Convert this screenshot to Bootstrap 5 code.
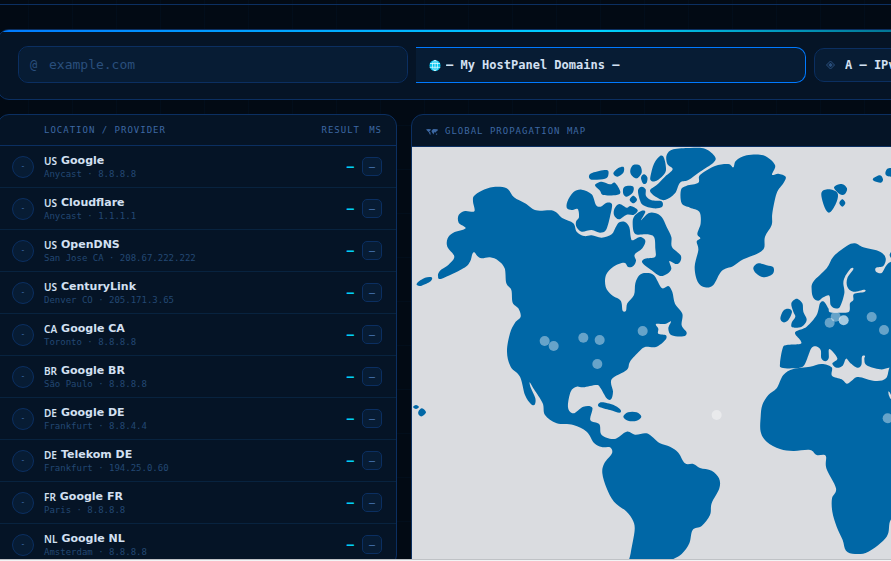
<!DOCTYPE html>
<html lang="en" data-bs-theme="dark">
<head>
<meta charset="utf-8">
<meta name="viewport" content="width=device-width, initial-scale=1">
<title>DNS Propagation</title>
<link href="https://cdn.jsdelivr.net/npm/bootstrap@5.3.0/dist/css/bootstrap.min.css" rel="stylesheet">
<style>
:root{--mono:"DejaVu Sans Mono","Liberation Mono",monospace;--line:#0b2f61;--panel:#051426;--field:#071c34;--dim:#234873;--label:#3d68a3;--text:#d3e0f2}
body{background:#020a14;color:var(--text);font-family:var(--mono);height:100vh;overflow:hidden}
.stage{overflow:hidden;background-image:linear-gradient(90deg,rgba(0,122,255,.03) 1px,transparent 1px),linear-gradient(rgba(0,122,255,.03) 1px,transparent 1px);background-size:44px 44px;background-position:28px 37px}
.topline{height:5px;border-bottom:1px solid var(--line)}
.shell{min-width:1200px;margin-left:-3px;padding-top:24px}
.panel{background:var(--panel);border:1px solid var(--line);border-radius:12px;overflow:hidden}
.search{margin-bottom:14px}
.search::before{content:"";display:block;height:2px;background:linear-gradient(90deg,#007aff,#00d4ff 50%,transparent)}
.fields{display:grid;grid-template-columns:390fr 390fr 362fr;gap:8px;padding:14px 20px 16px;align-items:center}
.fields .form-control,.fields .form-select{background-color:var(--field);border:1px solid var(--line);border-radius:10px;font-size:13px;line-height:19px;padding:8px 12px 8px 30px;color:var(--text);box-shadow:none}
.fields .form-control::placeholder{color:#2a4f7c;opacity:1}
.fields .form-select{font-size:12px;font-weight:700;background-image:none;line-height:18px;padding-left:30px}
.fields .domains{border-color:#007aff;border-left:0;border-radius:0 10px 10px 0}
.fields .rtype{height:34px;padding:7px 12px 7px 30px}
.glyph{left:12px;top:50%;transform:translateY(-50%);color:#2a4f7c;font-size:12px;line-height:14px;pointer-events:none}
.panels{display:grid;grid-template-columns:400px 1fr;gap:14px;align-items:start}
.cap{font-size:9px;line-height:13px;letter-spacing:1px;color:var(--label);font-weight:400}
.servers{width:100%;border-collapse:separate;border-spacing:0}
.servers th{height:31px;padding-top:2px;border-bottom:1px solid var(--line)}
.servers td{height:42px;border-bottom:1px solid #08233f}
.servers .who{padding-left:14px}
.servers th.who{padding-left:46px}
.servers .res{width:64px;text-align:right}
.servers td.res{padding-right:7px;color:#00d0f5;font-size:12px;font-weight:700}
.servers .ms{width:34px;padding-right:14px;text-align:right}
.server{gap:10px}
.dot{width:22px;height:22px;border:1px solid var(--line);background:var(--field);font-size:8px;color:var(--label)}
.cc{font:600 10px/14px "Noto Sans",sans-serif}
.host{font:700 11px/14px "DejaVu Sans",sans-serif}
.place{font-size:9px;line-height:12px;color:var(--dim)}
.pill{display:block;width:20px;border:1px solid var(--line);border-radius:5px;background:var(--field);color:#4a7ab8;font-size:10px;line-height:17px;text-align:center}
.maphead{height:32px;padding:2px 0 0 14px;gap:7px;border-bottom:1px solid var(--line)}
.world{display:block;width:100%;background:#dadce0}
.strip{height:2px;background:#f3f4f5;border-top:1px solid #bfc2c6}
</style>
<script src="https://cdn.jsdelivr.net/npm/bootstrap@5.3.0/dist/js/bootstrap.bundle.min.js"></script>
</head>
<body class="d-flex flex-column">
<main class="stage flex-grow-1">
  <div class="topline"></div>
  <div class="shell">
    <form class="panel search">
      <div class="fields">
        <div class="position-relative">
          <span class="glyph position-absolute" aria-hidden="true">@</span>
          <input class="form-control" type="text" placeholder="example.com" aria-label="Domain">
        </div>
        <div class="position-relative">
          <svg class="glyph position-absolute" width="14" height="14" viewBox="0 0 14 14" aria-hidden="true"><circle cx="7" cy="7.500" r="5.500" fill="#00c4ee"/><g fill="none" stroke="#d9faff" stroke-width=".8"><ellipse cx="7" cy="7.500" rx="2.500" ry="5.200"/><path d="M2 5.500h10M1.700 9.300h10.600M7 2.200v10.600"/></g></svg>
          <select class="form-select domains" aria-label="HostPanel domain"><option>— My HostPanel Domains —</option></select>
        </div>
        <div class="position-relative">
          <svg class="glyph position-absolute" width="9" height="9" viewBox="0 0 9 9" aria-hidden="true"><path d="M4.500.5l4 4-4 4-4-4z" fill="none" stroke="#2a4f7c"/><path d="M4.500 2.300l2.200 2.200-2.200 2.200-2.200-2.200z" fill="#2a4f7c"/></svg>
          <select class="form-select rtype" aria-label="Record type"><option>A — IPv4 Address</option></select>
        </div>
      </div>
    </form>
    <div class="panels">
      <section class="panel">
        <table class="servers">
          <thead><tr><th class="cap who">LOCATION / PROVIDER</th><th class="cap res">RESULT</th><th class="cap ms">MS</th></tr></thead>
          <tbody id="rows"></tbody>
        </table>
      </section>
      <section class="panel">
        <div class="maphead cap d-flex align-items-center">
          <svg width="12" height="8" viewBox="0 0 12 8" fill="#3d68a3" aria-hidden="true"><path d="M0 1.500L2 1l3 .3L4 3 3 3.500l1.500 1L4.500 7 3.500 6 3 4.500 1.500 3zM6 2l1.500-1 4 .2.5 1-1.500 1-.7 1.500-1-1L8 5 7.500 6.500 6.500 5 5.500 3.500zM10 5.500l1.300.2-.3 1.100-1.200-.3z"/></svg>
          <span>GLOBAL PROPAGATION MAP</span>
        </div>
        <svg class="world" viewBox="6 21 2352 1320" role="img" aria-label="World map of resolvers"><g id="land" fill="#0067a6"></g><g id="pins" fill="#fff"></g></svg>
      </section>
    </div>
  </div>
</main>
<div class="strip flex-shrink-0"></div>
<script>
const servers = [
  ["US","Google","Anycast · 8.8.8.8"],["US","Cloudflare","Anycast · 1.1.1.1"],
  ["US","OpenDNS","San Jose CA · 208.67.222.222"],["US","CenturyLink","Denver CO · 205.171.3.65"],
  ["CA","Google CA","Toronto · 8.8.8.8"],["BR","Google BR","São Paulo · 8.8.8.8"],
  ["DE","Google DE","Frankfurt · 8.8.4.4"],["DE","Telekom DE","Frankfurt · 194.25.0.60"],
  ["FR","Google FR","Paris · 8.8.8.8"],["NL","Google NL","Amsterdam · 8.8.8.8"]
];
document.getElementById("rows").innerHTML = servers.map(([c,n,p]) => `<tr>
  <td class="who"><div class="server d-flex align-items-center"><span class="dot rounded-circle d-flex align-items-center justify-content-center">-</span>
  <div><div class="d-flex gap-1"><span class="cc">${c}</span><span class="host">${n}</span></div><div class="place">${p}</div></div></div></td>
  <td class="res">—</td><td class="ms"><span class="pill">—</span></td></tr>`).join("");

// Coastlines: [offset x, offset y, "x,y x,y ..."], joined by smooth curves
const coasts = [
 [0,0,"192,168 215,152 250,141 290,145 312,172 345,190 378,211 430,212 458,235 490,250 500,275 522,288 545,286 575,293 605,283 617,262 628,247 645,246 658,262 662,290 668,301 690,291 706,302 697,325 674,344 678,362 670,378 655,381 642,368 610,380 588,405 587,440 605,465 632,482 638,512 648,512 652,490 672,465 676,430 688,406 707,399 732,406 755,444 775,438 787,456 795,491 817,521 815,556 830,578 820,589 785,586 775,566 783,544 765,552 738,552 745,566 745,581 768,586 765,601 738,621 705,621 688,634 660,665 650,690 605,718 609,755 603,778 590,775 572,745 560,735 520,742 500,740 482,755 474,802 490,820 520,800 547,803 541,840 568,853 575,885 613,897 650,875 675,884 705,880 720,885 750,910 780,920 805,938 825,970 850,972 870,984 905,992 927,1015 928,1045 905,1090 900,1125 875,1158 848,1170 838,1210 815,1242 780,1262 720,1290 655,1290 662,1240 674,1170 668,1140 650,1115 612,1085 590,1045 577,1000 583,970 606,940 600,922 575,921 553,910 530,875 490,855 440,850 405,825 398,790 372,748 359,727 363,745 376,775 374,794 362,791 345,765 330,710 302,680 291,635 300,580 315,548 332,530 325,505 308,488 304,450 289,430 284,385 265,362 240,352 215,355 202,348 193,337 187,342 180,365 160,385 95,416 84,408 90,392 115,375 133,350 112,320 113,295 130,278 167,265 146,248 146,225 165,213 193,214 189,185"],
 [0,0,"22,428 45,413 65,412 62,424 35,437 22,436"],
 [0,0,"9,801 18,795 27,801 18,807"],
 [0,0,"25,815 36,805 48,817 36,829 27,825"],
 [0,0,"567,790 580,787 615,797 632,810 628,818 600,810 567,800"],
 [0,0,"640,830 654,817 680,817 694,830 680,842 654,842"],
 [0,0,"472,185 490,157 515,149 545,163 558,195 572,200 590,188 606,193 600,230 588,270 570,278 545,270 515,275 500,262 498,245 507,232 503,207 485,210 471,205"],
 [0,0,"537,108 548,98 590,90 595,105 585,116 545,119"],
 [0,0,"610,100 625,84 641,81 640,98 622,110"],
 [0,0,"555,135 575,125 600,133 615,128 631,155 620,165 580,165 570,152"],
 [0,0,"640,145 650,138 670,140 668,158 650,170 640,162"],
 [0,0,"659,179 670,167 681,179 670,190"],
 [0,0,"661,90 670,75 690,77 695,98 680,115 664,105"],
 [0,0,"693,113 702,103 712,112 710,128 700,131"],
 [0,0,"614,205 628,192 650,203 662,198 683,210 672,224 650,224 627,238 612,225"],
 [0,0,"684,151 695,140 707,148 708,168 725,181 755,184 756,201 730,205 700,196 690,181"],
 [510,6,"158,240 165,220 185,206 196,210 183,235 205,214 225,213 245,225 260,255 274,285 276,315 302,340 300,360 288,366 268,357 274,380 262,395 240,402 215,385 187,362 195,350 225,345 226,320 222,285 200,277 165,275"],
 [510,6,"212,100 222,65 240,42 252,48 258,85 245,105 225,118 212,115"],
 [720,0,"50,45 70,28 120,24 165,26 195,50 190,68 150,95 115,120 90,128 75,160 45,180 20,172 0,152 20,135 45,110 68,88 52,72"],
 [720,0,"93,150 110,137 145,128 150,105 195,78 235,72 250,82 258,62 290,46 340,46 375,75 366,104 385,101 407,110 400,130 380,160 367,220 365,255 345,290 342,325 320,342 280,358 250,378 215,393 190,435 165,442 143,425 134,380 145,330 140,305 151,295 142,282 152,250 148,215 120,203 95,190"],
 [720,0,"310,383 325,370 350,376 370,382 368,402 340,412 318,400"],
 [720,0,"514,160 535,148 562,158 560,185 540,217 525,205"],
 [720,0,"552,142 575,132 591,145 585,162 570,163"],
 [720,0,"568,189 577,178 586,189 577,200"],
 [720,0,"670,115 690,106 699,118 693,128 672,123"],
 [720,0,"706,100 712,86 730,86 730,108 712,108"],
 [720,0,"719,345 726,334 734,345 726,356"],
 [720,0,"424,490 440,476 457,490 460,515 470,540 455,560 427,562 425,548 436,530 430,515"],
 [720,0,"391,535 400,512 415,506 426,515 415,540 400,547"],
 [720,0,"485,450 490,425 530,385 550,350 590,318 615,310 640,322 690,335 707,355 700,378 678,383 678,395 695,399 708,378 722,366 760,360 780,500 760,680 717,683 690,688 650,676 643,658 645,648 636,650 634,675 622,683 600,668 588,656 578,677 560,683 547,670 562,655 538,627 536,655 526,664 514,655 512,630 498,619 484,625 470,660 458,680 430,685 395,683 390,670 398,625 410,615 450,612 452,602 436,583 440,573 470,560 500,525 510,490 522,485 535,505 540,517 570,518 597,515 600,490 610,480 612,462 643,456 643,449 610,455 592,440 592,415 610,388 603,385 585,410 580,430 583,460 570,500 555,505 542,495 538,467 520,472 505,482 490,473"],
 [720,570,"515,102 480,110 430,117 400,135 380,175 355,195 337,225 332,260 332,305 350,335 390,357 430,363 480,360 500,375 527,377 529,415 558,475 546,505 547,545 560,590 578,630 588,662 615,672 655,665 710,620 722,570 760,540 790,300 760,90 722,108 708,145 675,153 625,141 605,152 590,161 575,148 546,137 545,112"]
];
const smooth = (ox, oy, s) => {
  const p = s.split(" ").map(t => { const [x,y] = t.split(",").map(Number); return [x+ox, y+oy]; });
  const n = p.length, at = i => p[(i+n)%n];
  let d = `M${p[0]}`;
  for (let i=0;i<n;i++){
    const [a,b,c,e] = [at(i-1),at(i),at(i+1),at(i+2)];
    d += `C${b[0]+(c[0]-a[0])/6},${b[1]+(c[1]-a[1])/6} ${c[0]-(e[0]-b[0])/6},${c[1]-(e[1]-b[1])/6} ${c}`;
  }
  return d + "Z";
};
document.getElementById("land").innerHTML = coasts.map(c => `<path d="${smooth(...c)}"/>`).join("")
  + '<path fill="#dadce0" d="M1435 754q6 2 12 22l-6 0q-7-12-6-22z"/>';
const pins = [[404,603],[431,618],[520,593],[569,600],[562,672],[698,573],[920,825],[1259,548],[1277,530],[1301,541,.65],[1385,531],[1422,570],[1433,835]];
document.getElementById("pins").innerHTML = pins.map(([x,y,o=.4]) => `<circle cx="${x}" cy="${y}" r="15" opacity="${o}"/>`).join("");
</script>
</body>
</html>
